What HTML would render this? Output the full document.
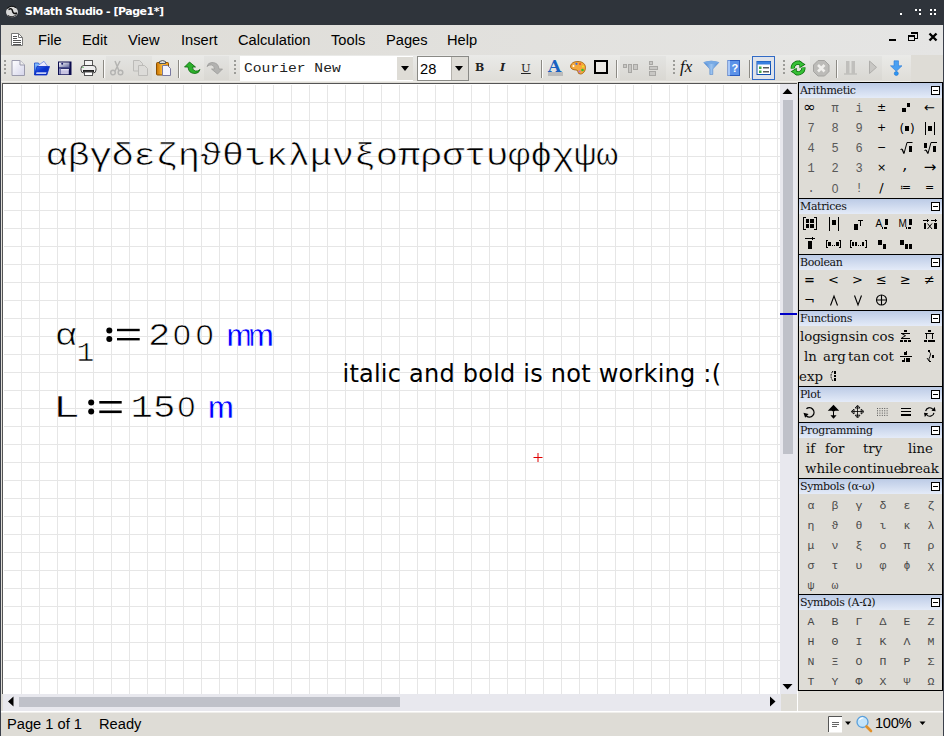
<!DOCTYPE html>
<html><head><meta charset="utf-8"><title>SMath Studio - [Page1*]</title>
<style>
*{box-sizing:border-box;margin:0;padding:0}
html,body{width:944px;height:736px;overflow:hidden;background:#dedcd6}
body{position:relative;font-family:"Liberation Sans",sans-serif;color:#000}
.abs{position:absolute}
#title{left:0;top:0;width:944px;height:25px;background:#2f343b;color:#fff;font:bold 11px "DejaVu Sans",sans-serif}
#title span{position:absolute;left:25px;top:5px;white-space:nowrap;letter-spacing:-0.48px}
#lborder{left:0;top:25px;width:1px;height:711px;background:#3b404b}
#menubar{left:1px;top:25px;width:943px;height:30px;background:linear-gradient(to right,#dedcd6,#e5e5e4)}
#menubar span{position:absolute;top:6px;font-size:14.67px;white-space:nowrap;line-height:18px}
#toolbar{left:1px;top:55px;width:943px;height:28px;background:linear-gradient(#eaeae8,#dfddd8 26px,#efeeea 26px,#efeeea 27px,#dedcd6 27px)}
#canvas{left:2px;top:83px;width:778px;height:611px;border-left:1px solid #555;border-top:1px solid #555;background-color:#fff;
background-image:linear-gradient(to right,#e6e6e6 1px,transparent 1px),linear-gradient(to bottom,#e6e6e6 1px,transparent 1px);background-size:18px 18px;background-position:0 0;box-shadow:inset 1px 0 0 #fff,inset 0 1px 0 #fff}
#vscroll{left:780px;top:83px;width:17px;height:611px;background:#e8e8ee;border-top:1px solid #555}
#hscroll{left:3px;top:694px;width:778px;height:17px;background:#e8e8ee}
#status{left:1px;top:711px;width:943px;height:25px;background:#dedcd6;border-top:1px solid #fff;box-shadow:inset 0 1px 0 #f0efec;font-size:14.67px}
.thumb{background:#bfc1c9;position:absolute}
#panel{left:798px;top:82px;width:145px;height:609px;background:#dedcd6;border-left:1px solid #000;border-right:1px solid #000;border-bottom:1px solid #000}
.ph{position:relative;height:16px;border-top:1px solid #000;background:linear-gradient(#bccbe6,#e4ebf8);font:11px/15px "DejaVu Serif",serif;padding-left:1px;white-space:nowrap;color:#111;letter-spacing:-.36px}
.ph i{position:absolute;right:2px;top:3px;width:9px;height:9px;border:1px solid #000;background:#fff}
.ph i:after{content:"";position:absolute;left:1px;top:3px;width:5px;height:1px;background:#000}
.row{height:20px;position:relative}
.row b{position:absolute;top:0;width:24px;height:20px;text-align:center;font-weight:normal;white-space:nowrap}
.row b.m{font:12px/22px "Liberation Mono",monospace;color:#585858}
.row b.z{font:12px/22px "Liberation Sans",sans-serif;color:#585858}
.row b.p{font:11px/20px "DejaVu Sans",sans-serif;color:#000;margin-left:-1.500px}
.row b.oi{font:15px/19px "DejaVu Sans",sans-serif;color:#000;margin-left:-1.500px}
.row b.oa{font:15px/19px "DejaVu Sans",sans-serif;color:#000;margin-left:-1px}
.row b.oc{font:italic 15px/15px "DejaVu Sans",sans-serif;color:#000;margin-left:-1.500px}
.row b.g{font:11.500px/23px "Liberation Mono",monospace;color:#484848}
.row b.o{font:13px/20px "DejaVu Sans",sans-serif;color:#000;margin-left:-1.500px}
.row b.ob{font:bold 13px/20px "DejaVu Sans",sans-serif;color:#000;margin-left:-1.500px}
.row b.f{font:13.330px/22px "DejaVu Serif",serif;color:#111;text-align:left}
.ci{position:absolute;top:0;width:24px;height:20px}
.ic{position:absolute;top:5px;width:16px;height:16px;overflow:visible}
.dis{position:absolute;top:1px;height:24px;background:rgba(0,0,0,.022)}
.grip{position:absolute;top:5px;width:3px;height:16px;background:radial-gradient(circle at 1px 1px,#9c9c98 0.9px,#fff 1px,#fff 1.400px,transparent 1.500px);background-size:3px 4px}
.sep{position:absolute;top:5px;width:2px;height:18px;border-left:1px solid #8c8a84;border-right:1px solid #fbfbfa}
.arr{position:absolute;width:0;height:0;border-left:4px solid transparent;border-right:4px solid transparent;border-top:5px solid #000}
.mono{font-family:"Liberation Mono",monospace}
.doc{position:absolute;white-space:pre;font-family:"Liberation Mono",monospace;color:#000}
</style></head><body>
<div id="title" class="abs"><svg class="abs" style="left:0;top:0" width="944" height="25" viewBox="0 0 944 25"><ellipse cx="12" cy="12" rx="6" ry="5.200" fill="#d8d8d8"/><path d="M8.500 9.500q3.500-2 4 1.500t4.500 2" stroke="#111" stroke-width="1.600" fill="none"/><path d="M7 8.500q4-4 9-1" stroke="#111" stroke-width="1" fill="none"/><path d="M8 15.500q4 3 8.500-1" stroke="#222" stroke-width="1" fill="none"/>
<g fill="#fff" shape-rendering="crispEdges"><rect x="900" y="13" width="2" height="2"/><rect x="915" y="9" width="2" height="2"/><rect x="919" y="9" width="2" height="2"/><rect x="919" y="13" width="2" height="2"/><rect x="930" y="9" width="2" height="2"/><rect x="934" y="9" width="2" height="2"/><rect x="930" y="13" width="2" height="2"/><rect x="934" y="13" width="2" height="2"/></g></svg><span>SMath Studio - [Page1*]</span></div>

<div id="menubar" class="abs">
<svg class="abs" style="left:0;top:0" width="943" height="30" viewBox="1 25 943 30"><path d="M11.500 33.500h7l4 4v8h-11z" fill="#fff" stroke="#777"/><path d="M18.500 33.500v4h4" fill="none" stroke="#777"/><path d="M13 36.500h4M13 38.500h4M13 40.500h8M13 42.500h8M13 44.500h8" stroke="#555" stroke-width="1" shape-rendering="crispEdges"/>
<rect x="889" y="39" width="7" height="2" fill="#000"/>
<g fill="none" stroke="#000" shape-rendering="crispEdges"><path d="M911 32.500h6v6h-2" stroke-width="1"/><rect x="911" y="32" width="7" height="2" fill="#000" stroke="none"/><rect x="908.500" y="35.500" width="6" height="5" stroke-width="1"/><rect x="908" y="35" width="7" height="2" fill="#000" stroke="none"/></g>
<path d="M929.500 33.500l7 7M936.500 33.500l-7 7" stroke="#000" stroke-width="2.400" fill="none"/></svg>
<span style="left:37px">File</span><span style="left:81px">Edit</span><span style="left:127px">View</span><span style="left:180px">Insert</span><span style="left:237px">Calculation</span><span style="left:330px">Tools</span><span style="left:385px">Pages</span><span style="left:446px">Help</span>
</div>
<div id="toolbar" class="abs">
<div class="dis" style="left:105px;width:46px"></div><div class="dis" style="left:203px;width:25px"></div><div class="dis" style="left:619px;width:46px"></div><div class="dis" style="left:809px;width:72px"></div>
<div class="abs" style="left:910px;top:0;width:33px;height:27px;background:#dedcd6"></div>
<div class="grip" style="left:3px"></div><div class="grip" style="left:233px"></div><div class="grip" style="left:672px"></div><div class="grip" style="left:782px"></div>
<div class="sep" style="left:102px"></div><div class="sep" style="left:177px"></div><div class="sep" style="left:540px"></div><div class="sep" style="left:615px"></div><div class="sep" style="left:748px"></div><div class="sep" style="left:835px"></div>
<!-- new -->
<svg class="ic" style="left:9px" viewBox="0 0 16 16"><defs><linearGradient id="gp" x1="0" y1="0" x2="1" y2="1"><stop offset="0" stop-color="#fff"/><stop offset="1" stop-color="#d4d4ea"/></linearGradient></defs><path d="M2 .5h8l4.500 4.500v10.500h-12.500z" fill="url(#gp)" stroke="#9a9aac"/><path d="M10 .5v4.500h4.500" fill="#eee" stroke="#9a9aac"/></svg>
<!-- open -->
<svg class="ic" style="left:32px" viewBox="0 0 16 16"><defs><linearGradient id="gb" x1="0" y1="0" x2="1" y2="1"><stop offset="0" stop-color="#3a78f0"/><stop offset=".45" stop-color="#0c34d0"/><stop offset="1" stop-color="#0a2cb8"/></linearGradient><linearGradient id="gb2" x1="0" y1="0" x2="0" y2="1"><stop offset="0" stop-color="#8cc8ff"/><stop offset="1" stop-color="#2a62e0"/></linearGradient></defs><path d="M1.500 3h4l1 1.500v10h-5z" fill="url(#gb2)" stroke="#1848c8" stroke-width=".8"/><path d="M4 6.300l7-5l3.200 4.500l-6.500 5z" fill="#eceaff" stroke="#5a7ce0" stroke-width=".7"/><path d="M1.500 15l2.500-8.500h12.500l-2.700 8.500z" fill="url(#gb)" stroke="#0c2fc0" stroke-width=".8"/><path d="M3 14l.6-1.800h10l-.6 1.800z" fill="#e8ecff" opacity=".85"/></svg>
<!-- save -->
<svg class="ic" style="left:55.300px" viewBox="0 0 16 16"><defs><linearGradient id="gs" x1="0" y1="0" x2="1" y2="1"><stop offset="0" stop-color="#fff"/><stop offset="1" stop-color="#5a6098"/></linearGradient></defs><rect x="2" y="1.500" width="13.500" height="13.500" fill="#0c0c4e"/><rect x="3" y="2.500" width="10.500" height="5" fill="url(#gs)"/><rect x="3" y="7" width="10.500" height="1.600" fill="#4a4e8a"/><rect x="4.800" y="9" width="8" height="5.300" fill="#c8c4e2"/><rect x="4.800" y="9" width="8" height="1.300" fill="#e6e4f4"/><circle cx="6.200" cy="3.700" r="1" fill="#1a1a6a"/><rect x="3" y="8.600" width="1.800" height="5.700" fill="#8a8ec0"/></svg>
<!-- print -->
<svg class="ic" style="left:79px" viewBox="0 0 16 16"><rect x="4.500" y=".5" width="8" height="6" fill="#f4f4f4" stroke="#555"/><rect x="1" y="5.500" width="15" height="7.500" rx="3" fill="#eee" stroke="#444"/><rect x="3" y="10" width="11" height="2" fill="#222"/><rect x="4.500" y="12" width="8" height="3.500" fill="#fff" stroke="#555"/><rect x="2.500" y="7" width="1" height="1" fill="#2a2"/></svg>
<!-- cut (disabled) -->
<svg class="ic" style="left:108px" viewBox="0 0 16 16" fill="none" stroke="#b4b4b2" stroke-width="1.500"><path d="M6 1l4 10M11 1l-5 10"/><circle cx="4" cy="12.500" r="2.300"/><circle cx="11.500" cy="12.500" r="2.300"/></svg>
<!-- copy (disabled) -->
<svg class="ic" style="left:131px" viewBox="0 0 16 16" fill="#dcdbd8" stroke="#bcbbb8"><path d="M1.500 .5h6l3 3v7.500h-9z"/><path d="M6.500 5.500h6l3 3v7h-9z"/></svg>
<!-- paste -->
<svg class="ic" style="left:154px" viewBox="0 0 16 16"><defs><linearGradient id="go" x1="0" y1="0" x2="1" y2="0"><stop offset="0" stop-color="#c87000"/><stop offset=".5" stop-color="#ffc040"/><stop offset="1" stop-color="#f09010"/></linearGradient></defs><rect x="1.500" y="2.500" width="12" height="12.500" rx="1" fill="url(#go)" stroke="#8a5000"/><path d="M4.500 3.500v-2q3-2 6 0v2z" fill="#ddd" stroke="#555"/><path d="M7.500 5.500h5l3 3v7h-8z" fill="#f4f4ff" stroke="#7878a0"/></svg>
<!-- undo -->
<svg class="ic" style="left:183px" viewBox="0 0 16 16"><path d="M5.500 2l-5 5h3.500q.5 6.500 7 6.500q4 0 5-4q-2 2-4.500 1.500q-3-.5-3-4h3z" fill="#2cb02c" stroke="#0a6a0a" stroke-width=".8"/></svg>
<!-- redo -->
<svg class="ic" style="left:206px" viewBox="0 0 16 16"><path d="M10.500 14l5-5h-3.500q-.5-6.500-7-6.500q-4 0-5 4q2-2 4.500-1.500q3 .5 3 4h-3z" fill="#b2b2b0" stroke="#9c9c9a" stroke-width=".8"/></svg>
<!-- font combo -->
<div class="abs" style="left:239px;top:1px;width:173px;height:25px;background:#fff"></div>
<div class="abs" style="left:396px;top:2px;width:16px;height:23px;background:#dedcd6"></div>
<div class="arr" style="left:400px;top:11px"></div>
<div class="abs mono" style="left:243px;top:5px;font-size:14.67px;line-height:17px;white-space:pre;color:#222;transform:scaleY(.86);transform-origin:0 13px">Courier New</div>
<div class="abs" style="left:416px;top:1px;width:52px;height:25px;background:#fff;border:1px solid #8a8a86"></div>
<div class="abs" style="left:450px;top:2px;width:17px;height:23px;background:#dedcd6;border-left:1px solid #b4b2ac"></div>
<div class="arr" style="left:454px;top:11px"></div>
<div class="abs" style="left:419px;top:6px;font-size:14.67px;line-height:17px">28</div>
<!-- B I U -->
<div class="abs" style="left:474px;top:5px;font:bold 11px/16px 'DejaVu Serif',serif;color:#222">B</div>
<div class="abs" style="left:499px;top:5px;font:italic bold 11px/16px 'DejaVu Serif',serif;color:#222">I</div>
<div class="abs" style="left:520px;top:5px;font:11.5px/16px 'DejaVu Serif',serif;color:#222;text-decoration:underline">U</div>
<!-- A -->
<div class="abs" style="left:547px;top:1px;font:bold 17px/20px 'DejaVu Serif',serif;color:#1860c0">A</div>
<div class="abs" style="left:547px;top:17px;width:15px;height:4px;background:#bcbcbc"></div>
<!-- palette -->
<svg class="ic" style="left:569px" viewBox="0 0 16 16"><path d="M8 1.500c5 0 7.500 3 7.500 6s-2 6.500-5 6.500q-2.500 0-2.500-2t-2-2q-2 0-4-1q-1.500-1-1.500-3q1-4.500 7.500-4.500z" fill="#f4a83c" stroke="#a05800" stroke-width=".8"/><circle cx="3.500" cy="6" r="1" fill="#fff"/><circle cx="6.500" cy="3.800" r="1.100" fill="#3070f0"/><circle cx="10" cy="4" r="1.100" fill="#f05020"/><circle cx="13" cy="6.500" r="1.100" fill="#f0e020"/><circle cx="12.500" cy="10" r="1.300" fill="#30c030"/><circle cx="9.500" cy="11.500" r="1.100" fill="#b070e0"/></svg>
<!-- border -->
<div class="abs" style="left:592.700px;top:5.400px;width:14px;height:13.400px;border:2px solid #000;background:#eceae6"></div>
<!-- align -->
<svg class="ic" style="left:621px" viewBox="0 0 16 16" fill="#c8c7c4" stroke="#a8a7a4"><rect x="1.500" y="4.500" width="3" height="3"/><rect x="6.500" y="4.500" width="3" height="8"/><rect x="11.500" y="4.500" width="4" height="5"/></svg>
<svg class="ic" style="left:644px" viewBox="0 0 16 16" fill="#c8c7c4" stroke="#a8a7a4"><rect x="4.500" y="1.500" width="3" height="3"/><rect x="4.500" y="6.500" width="8" height="3"/><rect x="4.500" y="11.500" width="6" height="4"/></svg>
<!-- fx -->
<div class="abs" style="left:679px;top:2px;font:italic 17px/20px 'Liberation Serif',serif;color:#111;letter-spacing:0">fx</div>
<!-- funnel -->
<svg class="ic" style="left:702px" viewBox="0 0 16 16"><defs><linearGradient id="gf" x1="0" y1="0" x2="1" y2="0"><stop offset="0" stop-color="#3f7fd0"/><stop offset=".5" stop-color="#9cc4f0"/><stop offset="1" stop-color="#4a88d4"/></linearGradient></defs><path d="M.8 2.500q7.500-3 15 0l-6 6.500v5.500h-3v-5.500z" fill="url(#gf)" stroke="#5a8ccc" stroke-width=".6"/><ellipse cx="8.300" cy="2.500" rx="7.500" ry="1.500" fill="#78aae4"/></svg>
<!-- help book -->
<svg class="ic" style="left:725px" viewBox="0 0 16 16"><rect x="2" y=".5" width="11.500" height="15" fill="#5c92e8" stroke="#2a5cc0"/><rect x="2" y=".5" width="2" height="15" fill="#a8c8f8"/><text x="8.800" y="12" font-family="Liberation Sans,sans-serif" font-size="11" font-weight="bold" fill="#fff" text-anchor="middle">?</text></svg>
<!-- selected -->
<div class="abs" style="left:751px;top:1px;width:23px;height:24px;border:1px solid #316ac5;background:#dfe3ea"></div>
<svg class="ic" style="left:755px" viewBox="0 0 16 16"><rect x="1" y="1.500" width="13.500" height="13" fill="#fff" stroke="#1050b0"/><rect x="1" y="1.500" width="13.500" height="3" fill="#3a80e0"/><rect x="3" y="6.500" width="2.500" height="2.500" fill="#4a4"/><rect x="3" y="10.500" width="2.500" height="2.500" fill="#4a4"/><rect x="7" y="7.200" width="6" height="1.200" fill="#333"/><rect x="7" y="11.200" width="6" height="1.200" fill="#333"/></svg>
<!-- refresh -->
<svg class="ic" style="left:789px" viewBox="0 0 16 16"><g fill="none" stroke="#0a6a0a" stroke-width="4.200"><path d="M2.800 8.500A5.300 5.300 0 0 1 10.500 3.300"/><path d="M13.400 7.500A5.300 5.300 0 0 1 5.700 12.700"/></g><path d="M9 .3l6.500 4.200l-6 3.800z" fill="#0a6a0a"/><path d="M7.200 15.700l-6.500-4.200l6-3.800z" fill="#0a6a0a"/><g fill="none" stroke="#36c036" stroke-width="2.800"><path d="M2.800 8.500A5.300 5.300 0 0 1 10.500 3.300"/><path d="M13.400 7.500A5.300 5.300 0 0 1 5.700 12.700"/></g><path d="M9.700 1.500l4.500 3l-4.200 2.600z" fill="#36c036"/><path d="M6.500 14.500l-4.500-3l4.200-2.600z" fill="#36c036"/></svg>
<!-- stop -->
<svg class="ic" style="left:812px" viewBox="0 0 16 16"><path d="M5 .5h6.500l4.500 4.500v6.500l-4.500 4.500h-6.500l-4.500-4.500v-6.500z" fill="#bcbbb8" stroke="#a4a3a0"/><path d="M5 5l6.500 6.500M11.500 5l-6.500 6.500" stroke="#f0efec" stroke-width="2.600"/></svg>
<!-- pause -->
<svg class="ic" style="left:842px" viewBox="0 0 16 16" fill="#c0bfbc"><rect x="3" y="1" width="3.500" height="12.500"/><rect x="8.500" y="1" width="3.500" height="12.500"/><rect x="1" y="13.500" width="13" height="1" fill="#b4b3b0"/></svg>
<!-- play -->
<svg class="ic" style="left:865px" viewBox="0 0 16 16"><path d="M3.500 1l7 6.300l-7 6.200z" fill="#c8c7c4" stroke="#aeadaa"/></svg>
<!-- download -->
<svg class="ic" style="left:887px" viewBox="0 0 16 16"><path d="M6 .8h4.500v5h3.500l-5.700 5.500l-5.800-5.500h3.500z" fill="#4aa0f2" stroke="#2a7ad8" stroke-width=".6"/><circle cx="8.300" cy="13.500" r="2" fill="#2a96f4" stroke="#2070d0" stroke-width=".6"/></svg>
</div>
<div id="canvas" class="abs"></div>
<svg id="doc" class="abs" style="left:0;top:0" width="944" height="736" viewBox="0 0 944 736">
<g font-family="'Liberation Mono',monospace" font-size="37.33" fill="#000" stroke="#fff" stroke-width=".7">
<text transform="translate(45.5,164.5) scale(1,.82)" letter-spacing="-.37">αβγδεζηϑθικλμνξοπρστυφϕχψω</text>
<text transform="translate(54.800,344.5) scale(1,.82)">α</text>
<text transform="translate(76.500,360.5) scale(1,.93)" font-size="29.870">1</text>
<text transform="translate(148,345) scale(1,.855)">2</text>
<g font-family="'Liberation Sans',sans-serif" font-size="32" text-anchor="middle"><text transform="translate(182,345) scale(1,.9)">0</text><text transform="translate(204.700,345) scale(1,.9)">0</text><text transform="translate(186.500,417) scale(1,.9)">0</text></g>
<text transform="translate(226,345.5) scale(1.2,.85)" fill="#00f" letter-spacing="-4.5">mm</text>
<text transform="translate(52.500,417) scale(1.24,.855)">L</text>
<text transform="translate(130.500,417) scale(1,.855)">15</text>
<text transform="translate(207.500,417.5) scale(1.2,.85)" fill="#00f">m</text>
</g>
<g fill="#000"><circle cx="109.300" cy="330.600" r="3"/><circle cx="109.300" cy="339" r="3"/><rect x="117" y="328.800" width="22.700" height="2.400"/><rect x="117" y="338" width="22.700" height="2.400"/>
<circle cx="91.200" cy="402.500" r="3"/><circle cx="91.200" cy="411.500" r="3"/><rect x="99.300" y="401" width="22.400" height="2.600"/><rect x="99.300" y="410.500" width="22.400" height="2.600"/></g>
<text x="342.500" y="382" font-family="'DejaVu Sans',sans-serif" font-size="24" letter-spacing=".23" fill="#000">italic and bold is not working :(</text>
<path d="M533.500 457.500h9M538 453v9" stroke="#e00000" stroke-width="1" fill="none"/>
</svg>
<div id="vscroll" class="abs"><div class="thumb" style="left:3px;top:16px;width:10px;height:354px"></div></div>
<div id="hscroll" class="abs"><div class="thumb" style="left:16px;top:3px;width:381px;height:10px"></div></div>
<svg class="abs" style="left:0;top:0;pointer-events:none" width="944" height="736" viewBox="0 0 944 736"><path d="M782.500 94h10l-5-5.500zM782.500 684h10l-5 5.500zM13.500 696.500v10l-5.500-5zM770 696.500v10l5.500-5z" fill="#000"/><rect x="780" y="313" width="17" height="2" fill="#0000c8"/><rect x="797" y="691" width="1" height="20" fill="#fff"/><rect x="781" y="710" width="16" height="1" fill="#dedcd6"/></svg>
<div id="panel" class="abs">
<div class="ph">Arithmetic<i></i></div>
<div class="row"><b class="oi" style="left:0px">∞</b><b class="m" style="left:24px">π</b><b class="m" style="left:48px">i</b><b class="p" style="left:72px">±</b><svg class="ci" style="left:96px" viewBox="0 0 24 20" shape-rendering="crispEdges"><rect x="7" y="10" width="4" height="4" fill="#000"/><rect x="12" y="5" width="3" height="4" fill="#000"/></svg><b class="o" style="left:120px">←</b></div>
<div class="row"><b class="m" style="left:0px">7</b><b class="m" style="left:24px">8</b><b class="m" style="left:48px">9</b><b class="p" style="left:72px">+</b><svg class="ci" style="left:96px" viewBox="0 0 24 20" shape-rendering="crispEdges"><text x="4.500" y="15" font-family="DejaVu Sans,sans-serif" font-size="12" shape-rendering="auto">(</text><text x="15" y="15" font-family="DejaVu Sans,sans-serif" font-size="12">)</text><rect x="10" y="8" width="4" height="5" fill="#000"/></svg><svg class="ci" style="left:120px" viewBox="0 0 24 20" shape-rendering="crispEdges"><rect x="6" y="4" width="1" height="13" fill="#000"/><rect x="15" y="4" width="1" height="13" fill="#000"/><rect x="9" y="8" width="4" height="5" fill="#000"/></svg></div>
<div class="row"><b class="m" style="left:0px">4</b><b class="m" style="left:24px">5</b><b class="m" style="left:48px">6</b><b class="p" style="left:72px">−</b><svg class="ci" style="left:96px" viewBox="0 0 24 20" shape-rendering="crispEdges"><path d="M5.5 11.5L7 11" stroke="#000" stroke-width="1" fill="none" shape-rendering="geometricPrecision"/><path d="M7 11L9 15.5" stroke="#000" stroke-width="1.3" fill="none" shape-rendering="geometricPrecision"/><path d="M9 15.5L12 4.5" stroke="#000" stroke-width="1" fill="none" shape-rendering="geometricPrecision"/><path d="M12 4.5L17.5 4.5" stroke="#000" stroke-width="1" fill="none" shape-rendering="geometricPrecision"/><rect x="14" y="8" width="3" height="6" fill="#000"/></svg><svg class="ci" style="left:120px" viewBox="0 0 24 20" shape-rendering="crispEdges"><rect x="5" y="5" width="3" height="5" fill="#000"/><path d="M5.5 12.5L7 12" stroke="#000" stroke-width="1" fill="none" shape-rendering="geometricPrecision"/><path d="M7 12L9 15.5" stroke="#000" stroke-width="1.3" fill="none" shape-rendering="geometricPrecision"/><path d="M9 15.5L12 4.5" stroke="#000" stroke-width="1" fill="none" shape-rendering="geometricPrecision"/><path d="M12 4.5L18 4.5" stroke="#000" stroke-width="1" fill="none" shape-rendering="geometricPrecision"/><rect x="14" y="8" width="3" height="6" fill="#000"/></svg></div>
<div class="row"><b class="m" style="left:0px">1</b><b class="m" style="left:24px">2</b><b class="m" style="left:48px">3</b><b class="p" style="left:72px">×</b><b class="oc" style="left:96px">,</b><b class="oa" style="left:120px">→</b></div>
<div class="row"><b class="m" style="left:0px">.</b><b class="z" style="left:24px">0</b><b class="m" style="left:48px">!</b><b class="o" style="left:72px">/</b><b class="p" style="left:96px">≔</b><b class="p" style="left:120px">=</b></div>
<div class="ph">Matrices<i></i></div>
<div class="row"><svg class="ci" style="left:0px" viewBox="0 0 24 20" shape-rendering="crispEdges"><rect x="4" y="3" width="1" height="13" fill="#000"/><rect x="4" y="3" width="3" height="1" fill="#000"/><rect x="4" y="15" width="3" height="1" fill="#000"/><rect x="17" y="3" width="1" height="13" fill="#000"/><rect x="15" y="3" width="3" height="1" fill="#000"/><rect x="15" y="15" width="3" height="1" fill="#000"/><rect x="7" y="5" width="3" height="4" fill="#000"/><rect x="11" y="5" width="4" height="4" fill="#000"/><rect x="7" y="10" width="3" height="4" fill="#000"/><rect x="11" y="10" width="4" height="4" fill="#000"/></svg><svg class="ci" style="left:24px" viewBox="0 0 24 20" shape-rendering="crispEdges"><rect x="6" y="3" width="1" height="14" fill="#000"/><rect x="15" y="3" width="1" height="14" fill="#000"/><rect x="9" y="6" width="4" height="5" fill="#000"/></svg><svg class="ci" style="left:48px" viewBox="0 0 24 20" shape-rendering="crispEdges"><rect x="7" y="10" width="4" height="6" fill="#000"/><rect x="11" y="6" width="5" height="1" fill="#000"/><rect x="13" y="6" width="1" height="6" fill="#000"/></svg><svg class="ci" style="left:72px" viewBox="0 0 24 20" shape-rendering="crispEdges"><text x="4.500" y="13" font-family="Liberation Sans,sans-serif" font-size="10" shape-rendering="auto">A</text><rect x="14" y="5" width="3" height="6" fill="#000"/><rect x="11" y="13" width="1" height="2" fill="#000"/><rect x="13" y="13" width="3" height="2" fill="#000"/></svg><svg class="ci" style="left:96px" viewBox="0 0 24 20" shape-rendering="crispEdges"><text x="3.500" y="13" font-family="Liberation Sans,sans-serif" font-size="10">M</text><rect x="14" y="5" width="3" height="6" fill="#000"/><rect x="11" y="13" width="1" height="2" fill="#000"/><rect x="13" y="13" width="3" height="2" fill="#000"/></svg><svg class="ci" style="left:120px" viewBox="0 0 24 20" shape-rendering="crispEdges"><rect x="4" y="6" width="6" height="1" fill="#000"/><rect x="8" y="5" width="1" height="3" fill="#000"/><rect x="12" y="6" width="6" height="1" fill="#000"/><rect x="16" y="5" width="1" height="3" fill="#000"/><rect x="5" y="9" width="2" height="6" fill="#000"/><rect x="15" y="9" width="3" height="6" fill="#000"/><path d="M8.5 9.5L13 15" stroke="#000" stroke-width="1" fill="none" shape-rendering="geometricPrecision"/><path d="M13 9.5L8.5 15" stroke="#000" stroke-width="1" fill="none" shape-rendering="geometricPrecision"/></svg></div>
<div class="row"><svg class="ci" style="left:0px" viewBox="0 0 24 20" shape-rendering="crispEdges"><rect x="6" y="4" width="9" height="1" fill="#000"/><rect x="13" y="3" width="1" height="3" fill="#000"/><rect x="14" y="4" width="2" height="1" fill="#000"/><rect x="9" y="7" width="4" height="8" fill="#000"/></svg><svg class="ci" style="left:24px" viewBox="0 0 24 20" shape-rendering="crispEdges"><rect x="3" y="6" width="1" height="8" fill="#000"/><rect x="3" y="6" width="2" height="1" fill="#000"/><rect x="3" y="13" width="2" height="1" fill="#000"/><rect x="17" y="6" width="1" height="8" fill="#000"/><rect x="16" y="6" width="2" height="1" fill="#000"/><rect x="16" y="13" width="2" height="1" fill="#000"/><rect x="5" y="8" width="3" height="4" fill="#000"/><rect x="9" y="11" width="1" height="1" fill="#000"/><rect x="11" y="11" width="1" height="1" fill="#000"/><rect x="13" y="8" width="3" height="4" fill="#000"/></svg><svg class="ci" style="left:48px" viewBox="0 0 24 20" shape-rendering="crispEdges"><rect x="3" y="6" width="1" height="8" fill="#000"/><rect x="3" y="6" width="2" height="1" fill="#000"/><rect x="3" y="13" width="2" height="1" fill="#000"/><rect x="19" y="6" width="1" height="8" fill="#000"/><rect x="18" y="6" width="2" height="1" fill="#000"/><rect x="18" y="13" width="2" height="1" fill="#000"/><rect x="5" y="8" width="2" height="4" fill="#000"/><rect x="8" y="8" width="2" height="4" fill="#000"/><rect x="11" y="11" width="1" height="1" fill="#000"/><rect x="13" y="11" width="1" height="1" fill="#000"/><rect x="15" y="8" width="2" height="4" fill="#000"/></svg><svg class="ci" style="left:72px" viewBox="0 0 24 20" shape-rendering="crispEdges"><rect x="7" y="6" width="4" height="5" fill="#000"/><rect x="12" y="10" width="3" height="5" fill="#000"/></svg><svg class="ci" style="left:96px" viewBox="0 0 24 20" shape-rendering="crispEdges"><rect x="5" y="6" width="4" height="5" fill="#000"/><rect x="10" y="10" width="3" height="5" fill="#000"/><rect x="14" y="10" width="3" height="5" fill="#000"/></svg></div>
<div class="ph">Boolean<i></i></div>
<div class="row"><b class="ob" style="left:0px">=</b><b class="o" style="left:24px">&lt;</b><b class="o" style="left:48px">&gt;</b><b class="o" style="left:72px">≤</b><b class="o" style="left:96px">≥</b><b class="o" style="left:120px">≠</b></div>
<div class="row"><b class="o" style="left:0px">¬</b><svg class="ci" style="left:24px" viewBox="0 0 24 20" shape-rendering="crispEdges"><path d="M7.500 15.500L11 6L14.500 15.500" stroke="#000" stroke-width="1.100" fill="none" shape-rendering="geometricPrecision"/></svg><svg class="ci" style="left:48px" viewBox="0 0 24 20" shape-rendering="crispEdges"><path d="M7.500 5.500L11 15L14.500 5.500" stroke="#000" stroke-width="1.100" fill="none" shape-rendering="geometricPrecision"/></svg><svg class="ci" style="left:72px" viewBox="0 0 24 20" shape-rendering="crispEdges"><circle cx="10.500" cy="10" r="5" stroke="#000" stroke-width="1.100" fill="none" shape-rendering="geometricPrecision"/><path d="M5.500 10h10M10.500 5v10" stroke="#000" stroke-width="1.100" shape-rendering="geometricPrecision"/></svg></div>
<div class="ph">Functions<i></i></div>
<div class="row"><b class="f" style="left:1px;width:auto">log</b><b class="f" style="left:21px;width:auto">sign</b><b class="f" style="left:49.5px;width:auto">sin</b><b class="f" style="left:73px;width:auto">cos</b><svg class="ci" style="left:96px" viewBox="0 0 24 20" shape-rendering="crispEdges"><rect x="9" y="4" width="3" height="1.5" fill="#000"/><rect x="6" y="7" width="9" height="1" fill="#000"/><rect x="6" y="11.5" width="9" height="1" fill="#000"/><path d="M6.500 7.500L10.500 9.700L6.500 12" stroke="#000" fill="none" shape-rendering="geometricPrecision"/><rect x="5" y="14" width="3" height="2" fill="#000"/><rect x="9" y="14" width="3" height="2" fill="#000"/><rect x="13" y="14" width="3" height="2" fill="#000"/></svg><svg class="ci" style="left:120px" viewBox="0 0 24 20" shape-rendering="crispEdges"><rect x="9" y="4" width="3" height="1.5" fill="#000"/><rect x="6" y="7" width="9" height="1" fill="#000"/><rect x="7" y="8" width="1.3" height="5" fill="#000"/><rect x="13" y="8" width="1.3" height="5" fill="#000"/><rect x="5" y="14" width="3" height="2" fill="#000"/><rect x="9" y="14" width="3.5" height="2" fill="#000"/><rect x="13" y="14" width="3" height="2" fill="#000"/></svg></div>
<div class="row"><b class="f" style="left:5px;width:auto">ln</b><b class="f" style="left:24px;width:auto">arg</b><b class="f" style="left:49px;width:auto">tan</b><b class="f" style="left:74px;width:auto">cot</b><svg class="ci" style="left:96px" viewBox="0 0 24 20" shape-rendering="crispEdges"><rect x="9" y="6" width="2" height="2.5" fill="#000"/><rect x="11" y="4.5" width="1" height="4" fill="#000"/><rect x="5" y="10" width="12" height="1" fill="#000"/><rect x="7" y="13.5" width="2" height="2.5" fill="#000"/><rect x="9" y="12" width="1" height="4" fill="#000"/><rect x="11" y="12" width="4" height="4" fill="#000"/></svg><svg class="ci" style="left:120px" viewBox="0 0 24 20" shape-rendering="crispEdges"><path d="M9.500 4.500Q13 8 11 10.500T10.500 15.500M8 12l2 3" stroke="#000" stroke-width=".9" fill="none" shape-rendering="geometricPrecision"/><rect x="9" y="4" width="2" height="1.5" fill="#000"/><rect x="10" y="14.5" width="2" height="1.5" fill="#000"/><rect x="13" y="9" width="2" height="3" fill="#000"/></svg></div>
<div class="row"><b class="f" style="left:0px;width:auto">exp</b><svg class="ci" style="left:24px" viewBox="0 0 24 20" shape-rendering="crispEdges"><path d="M10 5Q6 10 10 15" stroke="#000" fill="none" stroke-dasharray="2 1" shape-rendering="geometricPrecision"/><rect x="11" y="5" width="2" height="3" fill="#000"/><rect x="11" y="9" width="2" height="2" fill="#000"/><rect x="11" y="12" width="2" height="3" fill="#000"/></svg></div>
<div class="ph">Plot<i></i></div>
<div class="row"><svg class="ci" style="left:0px" viewBox="0 0 24 20" shape-rendering="crispEdges"><g transform="translate(-1.6,0.3) translate(12,10) scale(0.85) translate(-12,-10)"><path d="M8.500 5.800A5.500 5.500 0 1 1 8.500 14.500" stroke="#000" stroke-width="1.600" fill="none" shape-rendering="geometricPrecision"/><path d="M5 10.500l6 1.500l-4 4.500z" fill="#000" shape-rendering="geometricPrecision"/></g></svg><svg class="ci" style="left:24px" viewBox="0 0 24 20" shape-rendering="crispEdges"><g transform="translate(-1.5,-0.3) translate(12,10) scale(0.88) translate(-12,-10)"><path d="M12 2l6.500 7h-4.500q-2 0-2 3q0-3-2-3h-4.500z" fill="#000" shape-rendering="geometricPrecision"/><path d="M12 18l-3.500-4h7z" fill="#000" shape-rendering="geometricPrecision"/><rect x="11.5" y="10" width="1" height="5" fill="#000"/></g></svg><svg class="ci" style="left:48px" viewBox="0 0 24 20" shape-rendering="crispEdges"><g transform="translate(-1.4,-0.4) translate(12,10) scale(0.8) translate(-12,-10)"><path d="M12 3v14M5 10h14" stroke="#000" stroke-width="1" fill="none"/><path d="M12 2l-3 3.500h6zM12 18l-3-3.500h6zM4 10l3.500-3v6zM20 10l-3.500-3v6z" fill="none" stroke="#000" stroke-width="1.100" shape-rendering="geometricPrecision"/></g></svg><svg class="ci" style="left:72px" viewBox="0 0 24 20" shape-rendering="crispEdges"><rect x="6.0" y="6.0" width="1" height="1" fill="#555" shape-rendering="geometricPrecision"/><rect x="6.0" y="8.3" width="1" height="1" fill="#555" shape-rendering="geometricPrecision"/><rect x="6.0" y="10.6" width="1" height="1" fill="#555" shape-rendering="geometricPrecision"/><rect x="6.0" y="12.9" width="1" height="1" fill="#555" shape-rendering="geometricPrecision"/><rect x="8.4" y="6.0" width="1" height="1" fill="#555" shape-rendering="geometricPrecision"/><rect x="8.4" y="8.3" width="1" height="1" fill="#555" shape-rendering="geometricPrecision"/><rect x="8.4" y="10.6" width="1" height="1" fill="#555" shape-rendering="geometricPrecision"/><rect x="8.4" y="12.9" width="1" height="1" fill="#555" shape-rendering="geometricPrecision"/><rect x="10.8" y="6.0" width="1" height="1" fill="#555" shape-rendering="geometricPrecision"/><rect x="10.8" y="8.3" width="1" height="1" fill="#555" shape-rendering="geometricPrecision"/><rect x="10.8" y="10.6" width="1" height="1" fill="#555" shape-rendering="geometricPrecision"/><rect x="10.8" y="12.9" width="1" height="1" fill="#555" shape-rendering="geometricPrecision"/><rect x="13.2" y="6.0" width="1" height="1" fill="#555" shape-rendering="geometricPrecision"/><rect x="13.2" y="8.3" width="1" height="1" fill="#555" shape-rendering="geometricPrecision"/><rect x="13.2" y="10.6" width="1" height="1" fill="#555" shape-rendering="geometricPrecision"/><rect x="13.2" y="12.9" width="1" height="1" fill="#555" shape-rendering="geometricPrecision"/><rect x="15.6" y="6.0" width="1" height="1" fill="#555" shape-rendering="geometricPrecision"/><rect x="15.6" y="8.3" width="1" height="1" fill="#555" shape-rendering="geometricPrecision"/><rect x="15.6" y="10.6" width="1" height="1" fill="#555" shape-rendering="geometricPrecision"/><rect x="15.6" y="12.9" width="1" height="1" fill="#555" shape-rendering="geometricPrecision"/></svg><svg class="ci" style="left:96px" viewBox="0 0 24 20" shape-rendering="crispEdges"><rect x="6" y="6" width="10" height="1.2" fill="#000"/><rect x="6" y="9.2" width="10" height="1.2" fill="#000"/><rect x="6" y="12.4" width="10" height="1.2" fill="#000"/></svg><svg class="ci" style="left:120px" viewBox="0 0 24 20" shape-rendering="crispEdges"><g transform="translate(-1.2,0) translate(12,10) scale(0.83) translate(-12,-10)"><path d="M7 9A5 5 0 0 1 16 7M17 11A5 5 0 0 1 8 13" stroke="#000" stroke-width="1.400" fill="none" shape-rendering="geometricPrecision"/><path d="M14 8.500l5 .5l-1-5zM10 11.500l-5-.5l1 5z" fill="#000" shape-rendering="geometricPrecision"/></g></svg></div>
<div class="ph">Programming<i></i></div>
<div class="row"><b class="f" style="left:7px;width:auto">if</b><b class="f" style="left:26px;width:auto">for</b><b class="f" style="left:64px;width:auto">try</b><b class="f" style="left:109px;width:auto">line</b></div>
<div class="row"><b class="f" style="left:6px;width:auto">while</b><b class="f" style="left:44px;width:auto">continue</b><b class="f" style="left:101px;width:auto">break</b></div>
<div class="ph">Symbols (α-ω)<i></i></div>
<div class="row"><b class="g" style="left:0px">α</b><b class="g" style="left:24px">β</b><b class="g" style="left:48px">γ</b><b class="g" style="left:72px">δ</b><b class="g" style="left:96px">ε</b><b class="g" style="left:120px">ζ</b></div>
<div class="row"><b class="g" style="left:0px">η</b><b class="g" style="left:24px">ϑ</b><b class="g" style="left:48px">θ</b><b class="g" style="left:72px">ι</b><b class="g" style="left:96px">κ</b><b class="g" style="left:120px">λ</b></div>
<div class="row"><b class="g" style="left:0px">μ</b><b class="g" style="left:24px">ν</b><b class="g" style="left:48px">ξ</b><b class="g" style="left:72px">ο</b><b class="g" style="left:96px">π</b><b class="g" style="left:120px">ρ</b></div>
<div class="row"><b class="g" style="left:0px">σ</b><b class="g" style="left:24px">τ</b><b class="g" style="left:48px">υ</b><b class="g" style="left:72px">φ</b><b class="g" style="left:96px">ϕ</b><b class="g" style="left:120px">χ</b></div>
<div class="row"><b class="g" style="left:0px">ψ</b><b class="g" style="left:24px">ω</b></div>
<div class="ph">Symbols (Α-Ω)<i></i></div>
<div class="row"><b class="g" style="left:0px">Α</b><b class="g" style="left:24px">Β</b><b class="g" style="left:48px">Γ</b><b class="g" style="left:72px">Δ</b><b class="g" style="left:96px">Ε</b><b class="g" style="left:120px">Ζ</b></div>
<div class="row"><b class="g" style="left:0px">Η</b><b class="g" style="left:24px">Θ</b><b class="g" style="left:48px">Ι</b><b class="g" style="left:72px">Κ</b><b class="g" style="left:96px">Λ</b><b class="g" style="left:120px">Μ</b></div>
<div class="row"><b class="g" style="left:0px">Ν</b><b class="g" style="left:24px">Ξ</b><b class="g" style="left:48px">Ο</b><b class="g" style="left:72px">Π</b><b class="g" style="left:96px">Ρ</b><b class="g" style="left:120px">Σ</b></div>
<div class="row"><b class="g" style="left:0px">Τ</b><b class="g" style="left:24px">Υ</b><b class="g" style="left:48px">Φ</b><b class="g" style="left:72px">Χ</b><b class="g" style="left:96px">Ψ</b><b class="g" style="left:120px">Ω</b></div>
</div>
<div id="status" class="abs"><span class="abs" style="left:6px;top:4px">Page 1 of 1</span><span class="abs" style="left:98px;top:4px">Ready</span><svg class="abs" style="left:0;top:0" width="943" height="24" viewBox="1 712 943 24"><rect x="828.500" y="716.500" width="13.500" height="16" fill="#fff" stroke="none"/><path d="M828.500 732v-15.500h13.500" fill="none" stroke="#555"/><path d="M832 722.500h7M832 724.500h7M832 726.500h5" stroke="#666" shape-rendering="crispEdges"/><path d="M845 721.500h6l-3 3.500zM919.500 721.500h6l-3 3.500z" fill="#000"/>
<circle cx="862.500" cy="722" r="5.500" fill="#c4e4fa" stroke="#5aa0dc" stroke-width="1.300"/><path d="M866.500 726.500l4.500 4.500" stroke="#e0902a" stroke-width="2.600" stroke-linecap="round"/><path d="M859.500 720q1.500-2.500 4-2" stroke="#fff" stroke-width="1.200" fill="none"/></svg><span class="abs" style="left:874px;top:3px;letter-spacing:-.3px">100%</span></div>
<div id="lborder" class="abs"></div><div class="abs" style="left:943px;top:25px;width:1px;height:711px;background:#3b404b"></div>
</body></html>
